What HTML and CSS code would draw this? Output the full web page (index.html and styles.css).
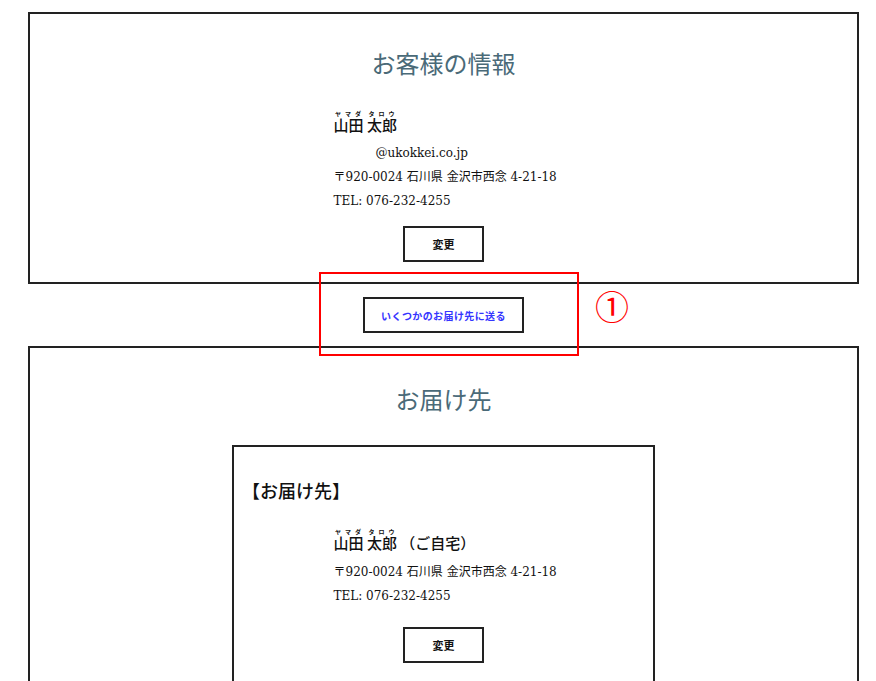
FILE: index.html
```html
<!DOCTYPE html>
<html lang="ja">
<head>
    <meta charset="UTF-8">
    <meta name="viewport" content="width=device-width, initial-scale=1.0">
    <title>お客様の情報</title>
    <link rel="stylesheet" href="styles.css">
</head>
<body>
    <div class="page">
        <section class="box">
            <h2 class="box-title">お客様の情報</h2>
            <div class="info">
                <p class="name"><ruby>山田<rt>ヤマダ</rt></ruby> <ruby>太郎<rt>タロウ</rt></ruby></p>
                <p class="mail">@ukokkei.co.jp</p>
                <p>〒920-0024 石川県 金沢市西念 4-21-18</p>
                <p>TEL: 076-232-4255</p>
            </div>
            <div class="actions">
                <button class="btn">変更</button>
            </div>
        </section>

        <div class="multi">
            <button class="btn btn-multi">いくつかのお届け先に送る</button>
            <!-- 注記用の赤枠 -->
            <span class="mark-frame"></span>
            <span class="mark-num">①</span>
        </div>

        <section class="box box-ship">
            <h2 class="box-title">お届け先</h2>
            <div class="card">
                <h3 class="card-title">【お届け先】</h3>
                <div class="info info-ship">
                    <p class="name"><ruby>山田<rt>ヤマダ</rt></ruby> <ruby>太郎<rt>タロウ</rt></ruby> （ご自宅）</p>
                    <p>〒920-0024 石川県 金沢市西念 4-21-18</p>
                    <p>TEL: 076-232-4255</p>
                </div>
                <div class="actions actions-ship">
                    <button class="btn">変更</button>
                </div>
            </div>
        </section>
    </div>
</body>
</html>
```

FILE: styles.css
```css
body {
    margin: 0;
    font-family: "DejaVu Serif", "Noto Sans CJK JP", serif;
    color: #111;
    background: #fff;
}
.page {
    padding: 12px 17px 0 28px;
}
.box {
    border: 2px solid #222;
    padding: 33px 0 20px;
}
.box-title {
    margin: 0;
    font-family: "Noto Sans CJK JP", sans-serif;
    font-weight: 400;
    font-size: 24px;
    line-height: 32px;
    color: #4a6a78;
    text-align: center;
}
.info {
    width: 220px;
    margin: 31px auto 0;
    font-size: 12px;
    line-height: 24px;
}
.info p {
    margin: 0;
    white-space: nowrap;
}
.name {
    font-family: "Noto Sans CJK JP", sans-serif;
    font-weight: 500;
    font-size: 15px;
    line-height: 30px !important;
    padding-bottom: 1px;
}
.name rt {
    font-size: 6px;
    font-weight: 700;
    letter-spacing: 1px;
}
.mail {
    padding-left: 42px;
}
.actions {
    display: flex;
    justify-content: center;
    margin-top: 13px;
}
.btn {
    width: 81px;
    height: 36px;
    border: 2px solid #222;
    background: #fff;
    font-family: "DejaVu Serif", "Noto Sans CJK JP", serif;
    font-size: 11px;
    font-weight: 700;
    color: #111;
    padding: 0;
}

/* 複数のお届け先 */
.multi {
    position: relative;
    display: flex;
    justify-content: center;
    padding: 13px 0;
}
.btn-multi {
    width: 161px;
    height: 36px;
    font-size: 10px;
    color: #3535ff;
    letter-spacing: 0.4px;
}
.mark-frame {
    position: absolute;
    left: 291px;
    top: -12px;
    width: 256px;
    height: 80px;
    border: 2px solid #f00;
}
.mark-num {
    position: absolute;
    left: 567px;
    top: 5px;
    font-family: "Noto Sans CJK JP", sans-serif;
    font-size: 34px;
    line-height: 34px;
    color: #f00;
}

/* お届け先 */
.box-ship {
    padding-top: 35px;
}
.card {
    width: 419px;
    margin: 30px auto 0;
    border: 2px solid #222;
    padding: 31px 0 40px;
}
.card-title {
    margin: 0;
    padding-left: 8px;
    font-family: "Noto Sans CJK JP", sans-serif;
    font-weight: 500;
    font-size: 18px;
    line-height: 24px;
}
.info-ship {
    margin-top: 26px;
}
.info-ship .name {
    padding-bottom: 2px;
}
.actions-ship {
    margin-top: 19px;
}
```
